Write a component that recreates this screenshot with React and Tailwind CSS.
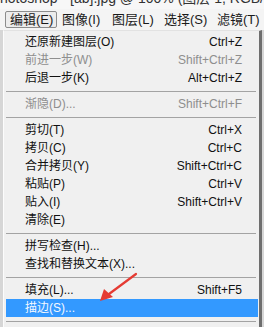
import React from 'react';

const items = [
  { label: '还原新建图层(O)', key: 'Ctrl+Z' },
  { label: '前进一步(W)', key: 'Shift+Ctrl+Z', off: true },
  { label: '后退一步(K)', key: 'Alt+Ctrl+Z' },
  'sep',
  { label: '渐隐(D)...', key: 'Shift+Ctrl+F', off: true },
  'sep',
  { label: '剪切(T)', key: 'Ctrl+X' },
  { label: '拷贝(C)', key: 'Ctrl+C' },
  { label: '合并拷贝(Y)', key: 'Shift+Ctrl+C' },
  { label: '粘贴(P)', key: 'Ctrl+V' },
  { label: '贴入(I)', key: 'Shift+Ctrl+V' },
  { label: '清除(E)' },
  'sep',
  { label: '拼写检查(H)...' },
  { label: '查找和替换文本(X)...' },
  'sep',
  { label: '填充(L)...', key: 'Shift+F5' },
  { label: '描边(S)...', active: true },
  'sep',
];

const menus = [
  { t: '编辑(E)', w: 'w-[52px]' },
  { t: '图像(I)', w: 'w-[50px]' },
  { t: '图层(L)', w: 'w-[52px]' },
  { t: '选择(S)', w: 'w-[53px]' },
  { t: '滤镜(T)', w: 'w-[46px]' },
];

function Row({ item }) {
  if (item === 'sep') {
    return (
      <div className="h-[8px] flex items-center pl-[2px] pr-[3px]">
        <div className="h-px w-full bg-[#a3a3a3]" />
      </div>
    );
  }
  const tone = item.active
    ? 'bg-[#3399ff] text-[#f4f8ff]'
    : item.off
    ? 'text-[#8e8e8e]'
    : 'text-[#111]';
  return (
    <div className={`h-[18px] flex items-center justify-between pl-[19px] pr-[16px] ml-[2px] mr-[1px] whitespace-nowrap ${tone}`}>
      <span className="text-[12px] leading-none">{item.label}</span>
      {item.key && <span className="text-[12px] leading-none">{item.key}</span>}
    </div>
  );
}

export default function App() {
  return (
    <div
      className="relative w-[264px] h-[327px] overflow-hidden bg-[#d6d6d6]"
      style={{ fontFamily: '"Liberation Sans", "Noto Sans CJK SC", sans-serif' }}
    >
      {/* window title, mostly cut off */}
      <div className="h-[9px] overflow-hidden bg-[#f7f7f7]">
        <div className="-mt-[10px] text-[14px] leading-[16px] text-[#333] whitespace-nowrap">
          hotoshop - [ab].jpg @ 100% (图层 1, RGB/8*)
        </div>
      </div>

      {/* menu bar */}
      <div className="h-[21px] bg-[#f4f4f4] flex items-center pl-[5px] whitespace-nowrap">
        {menus.map((m, i) => (
          <div
            key={m.t}
            className={`${m.w} h-[17px] shrink-0 flex items-center pl-[4px] text-[13px] leading-none text-[#1a1a1a] ${
              i === 0 ? 'border border-[#8c8c8c] rounded-[2px] bg-[#ececec]' : 'border border-transparent'
            }`}
          >
            {m.t}
          </div>
        ))}
      </div>

      {/* dropdown */}
      <div className="ml-[3px] w-[259px] h-[297px] bg-[#f0f0f0] border-l border-l-[#fcfcfc] border-t border-t-[#e2e2e2] border-r-[3px] border-r-[#6e6e6e] pt-[2px]">
        {items.map((it, i) => (
          <Row key={i} item={it} />
        ))}
      </div>

      {/* red arrow */}
      <svg className="absolute left-0 top-0" width="264" height="327" viewBox="0 0 264 327">
        <line x1="136" y1="274" x2="109" y2="294" stroke="#e53b33" strokeWidth="2.2" strokeLinecap="round" />
        <polygon points="100,301 104,289 113,297" fill="#e53b33" />
      </svg>
    </div>
  );
}
